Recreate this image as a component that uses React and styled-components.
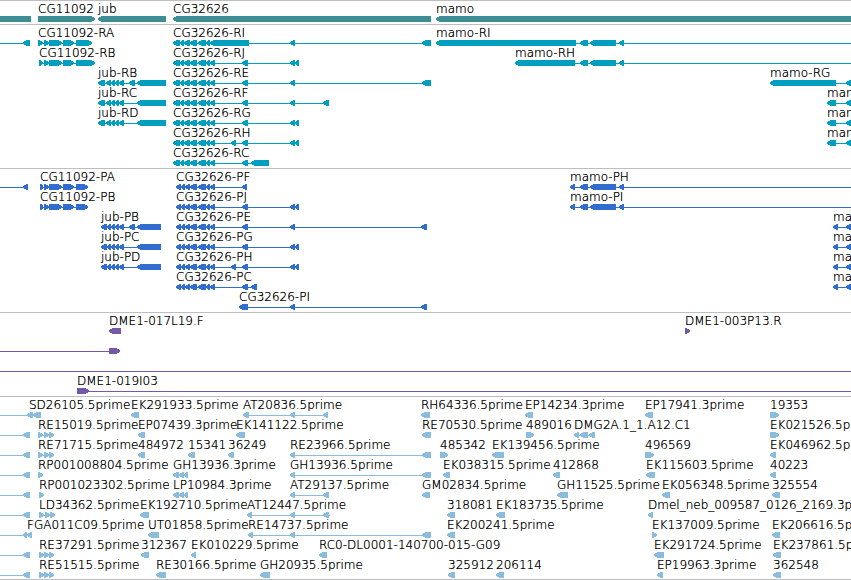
import React from "react";
import styled, { createGlobalStyle } from "styled-components";

const GlobalStyle = createGlobalStyle`
  body {
    margin: 0;
    background: #ffffff;
  }
`;

const Browser = styled.main`
  overflow: hidden;
  border-bottom: 1px solid #bebebe;
  color: #000000;
  font-family: "DejaVu Sans Light", "DejaVu Sans", sans-serif;
  font-size: 12px;
  font-weight: 200;
  line-height: 12px;
`;

const Track = styled.section`
  padding: 2px 0 ${(props) => (props.$last ? 0 : 1)}px;
  border-top: 1px solid #bebebe;
  color: ${(props) => props.$color};
`;

const Row = styled.div`
  display: flex;
  flex-direction: column;
  gap: 1px;
  height: 20px;
`;

// the shadow darkens the thin strokes without widening them
const Labels = styled.div`
  position: relative;
  height: 12px;
  color: #000000;
  text-shadow: 0 0 0 #000000;
`;

// labels start at the genomic position of their feature
const Label = styled.span`
  position: absolute;
  top: 0;
  white-space: nowrap;
`;

const Glyphs = styled.svg`
  display: block;
  width: 100%;
  height: 6px;
  fill: currentColor;
  shape-rendering: crispEdges;
`;

// features that run past the visible region start / end here
const LEFT = -10;
const RIGHT = 4000;
const TIP = 5;

const feature = (name, strand, exons, from, to) => ({
  name,
  strand,
  exons,
  from: from ?? exons[0][0],
  to: to ?? exons[exons.length - 1][1],
});

const rev = (name, exons, to) => feature(name, "-", exons, undefined, to);
const fwd = (name, exons, to) => feature(name, "+", exons, undefined, to);
const fromLeft = (end) => feature("", "-", [[23, end]], LEFT);

const genes = [
  [
    rev("", [[LEFT, 31]]),
    fwd("CG11092", [[38, 95]]),
    rev("jub", [[98, 166]]),
    rev("CG32626", [[173, 431]]),
    rev("mamo", [[436, RIGHT]]),
  ],
];

const cgR = [[173, 180], [180, 184], [184, 190], [190, 197], [198, 206], [206, 210], [210, 215]];
const jubR = [[98, 105], [106, 111], [111, 115], [115, 119], [119, 124]];
const mamoEnd = [[580, 588], [590, 616], [619, 624]];
const mid = [[242, 248]];
const pair = [[290, 295], [295, 299]];

const transcripts = [
  [
    fromLeft(30),
    fwd("CG11092-RA", [[38, 43], [44, 49], [49, 62], [63, 74], [76, 92]]),
    rev("CG32626-RI", [...cgR.slice(0, 6), [210, 249], [290, 295], [422, 431]]),
    rev("mamo-RI", [[436, 576], ...mamoEnd], RIGHT),
  ],
  [
    fwd("CG11092-RB", [[39, 43], [44, 49], [49, 62], [63, 74], [76, 95]]),
    rev("CG32626-RJ", [...cgR, ...mid, ...pair]),
    rev("mamo-RH", [[515, 575], ...mamoEnd], RIGHT),
  ],
  [
    rev("jub-RB", [...jubR, [129, 135], [137, 166]]),
    rev("CG32626-RE", [...cgR, ...mid, [290, 295], [422, 431]]),
    rev("mamo-RG", [[770, 836], [846, 853]], RIGHT),
  ],
  [
    rev("jub-RC", [...jubR, [137, 166]]),
    rev("CG32626-RF", [...cgR, ...mid, [290, 295], [323, 329]]),
    rev("mamo-RD", [[827, 836], [846, 853]], RIGHT),
  ],
  [
    rev("jub-RD", [...jubR, [137, 166]]),
    rev("CG32626-RG", [...cgR, ...mid, ...pair]),
    rev("mamo-RE", [[827, 836], [846, 853]], RIGHT),
  ],
  [
    rev("CG32626-RH", [...cgR, [231, 236], ...mid, ...pair]),
    rev("mamo-RF", [[827, 836], [846, 853]], RIGHT),
  ],
  [rev("CG32626-RC", [...cgR, ...mid, [251, 269]])],
];

const cgP = [[176, 181], [181, 185], [185, 190], [190, 197], [198, 206], [206, 210], [210, 215]];
const cg11092P = [[40, 43], [44, 49], [49, 62], [63, 74], [76, 88]];
const jubP = [[101, 107], [107, 111], [111, 115], [115, 119], [119, 124]];
const mamoP = [[833, 838], [846, 853]];

const proteins = [
  [
    fromLeft(28),
    fwd("CG11092-PA", cg11092P),
    rev("CG32626-PF", [...cgP, [242, 247]]),
    rev("mamo-PH", [[570, 575], ...mamoEnd], RIGHT),
  ],
  [
    fwd("CG11092-PB", cg11092P),
    rev("CG32626-PJ", [...cgP, ...mid, ...pair]),
    rev("mamo-PI", [[570, 575], ...mamoEnd], RIGHT),
  ],
  [
    rev("jub-PB", [...jubP, [129, 135], [137, 161]]),
    rev("CG32626-PE", [...cgP, ...mid, [290, 295], [421, 427]]),
    rev("mamo-PG", mamoP, RIGHT),
  ],
  [
    rev("jub-PC", [...jubP, [137, 161]]),
    rev("CG32626-PG", [...cgP, ...mid, ...pair]),
    rev("mamo-PD", mamoP, RIGHT),
  ],
  [
    rev("jub-PD", [...jubP, [137, 161]]),
    rev("CG32626-PH", [...cgP, [231, 236], ...mid, ...pair]),
    rev("mamo-PE", mamoP, RIGHT),
  ],
  [
    rev("CG32626-PC", [...cgP, ...mid, [251, 257]]),
    rev("mamo-PF", mamoP, RIGHT),
  ],
  [rev("CG32626-PI", [[239, 248], [290, 295], [421, 427]])],
];

const clones = [
  [rev("DME1-017L19.F", [[109, 121]]), fwd("DME1-003P13.R", [[685, 690]])],
  [feature("", "+", [[109, 120]], LEFT)],
  [feature("", "+", [], LEFT, RIGHT)],
  [fwd("DME1-019I03", [[77, 89]], RIGHT)],
];

const triple = [[38, 43], [44, 49], [49, 54]];
const triple2 = [[39, 44], [44, 49], [49, 54]];
const gh = [[173, 179], [179, 184], [184, 188]];

const ests = [
  [
    { ...feature("SD26105.5prime", "-", [[27, 33], [33, 41]], LEFT), labelAt: 29 },
    rev("EK291933.5prime", [[131, 139]]),
    rev("AT20836.5prime", [[243, 249], [290, 295], [323, 328]]),
    rev("RH64336.5prime", [[421, 430]]),
    rev("EP14234.3prime", [[525, 533]]),
    rev("EP17941.3prime", [[645, 653]]),
    fwd("19353", [[770, 779]]),
  ],
  [
    fromLeft(30),
    fwd("RE15019.5prime", triple),
    rev("EP07439.3prime", [[138, 145]]),
    rev("EK141122.5prime", [[236, 245]]),
    rev("RE70530.5prime", [[422, 431]]),
    fwd("489016", [[526, 534]]),
    rev("DMG2A.1_1.A12.C1", [[574, 579], [580, 588], [589, 595]]),
    fwd("EK021526.5prime", [[770, 779]]),
  ],
  [
    fromLeft(30),
    fwd("RE71715.5prime", triple),
    rev("484972", [[138, 145]]),
    rev("15341", [[188, 195]]),
    rev("36249", [[228, 234]]),
    rev("RE23966.5prime", [[290, 295], [422, 431]]),
    fwd("485342", [[440, 448]]),
    rev("EK139456.5prime", [[492, 504]]),
    fwd("496569", [[645, 654]]),
    rev("EK046962.5prime", [[770, 776]]),
  ],
  [
    fromLeft(30),
    fwd("RP001008804.5prime", [[38, 43]]),
    rev("GH13936.3prime", gh),
    rev("GH13936.5prime", [[290, 295], [422, 431]]),
    rev("EK038315.5prime", [[443, 450]]),
    rev("412868", [[553, 560]]),
    rev("EK115603.5prime", [[646, 655]]),
    rev("40223", [[770, 776]]),
  ],
  [
    fromLeft(30),
    fwd("RP001023302.5prime", [[39, 44]]),
    rev("LP10984.3prime", gh),
    rev("AT29137.5prime", [[290, 295], [323, 329]]),
    rev("GM02834.5prime", [[422, 430]]),
    rev("GH11525.5prime", [[557, 568]]),
    rev("EK056348.5prime", [[662, 670]]),
    rev("325554", [[772, 780]]),
  ],
  [
    fromLeft(30),
    fwd("LD34362.5prime", [[39, 44], [45, 50], [50, 55]]),
    rev("EK192710.5prime", [[140, 149]]),
    rev("AT12447.5prime", [[247, 252], [290, 295], [323, 329]], 330),
    rev("318081", [[447, 455]]),
    rev("EK183735.5prime", [[496, 505]]),
    rev("Dmel_neb_009587_0126_2169.3prime", [[648, 653]]),
  ],
  [
    { ...feature("FGA011C09.5prime", "-", [[23, 27], [27, 32]], LEFT), labelAt: 27 },
    rev("UT01858.5prime", [[148, 159]]),
    rev("RE14737.5prime", [[248, 253], [290, 295], [422, 431]]),
    rev("EK200241.5prime", [[447, 455]]),
    fwd("EK137009.5prime", [[652, 657]]),
    rev("EK206616.5prime", [[772, 780]]),
  ],
  [
    fromLeft(30),
    fwd("RE37291.5prime", triple2),
    rev("312367", [[141, 149]]),
    rev("EK010229.5prime", [[191, 196]]),
    rev("RC0-DL0001-140700-015-G09", [[319, 327]]),
    rev("EK291724.5prime", [[654, 664]]),
    rev("EK237861.5prime", [[773, 781]]),
  ],
  [
    fromLeft(30),
    fwd("RE51515.5prime", triple2),
    rev("RE30166.5prime", [[156, 166]]),
    rev("GH20935.5prime", [[260, 270]]),
    rev("325912", [[448, 455]]),
    rev("206114", [[496, 504]]),
    rev("EP19963.3prime", [[657, 663]]),
    rev("362548", [[773, 781]]),
  ],
];

const tracks = [
  { id: "genes", color: "#3f8d94", rows: genes },
  { id: "transcripts", color: "#009ebf", rows: transcripts },
  { id: "proteins", color: "#306dcf", rows: proteins },
  { id: "clones", color: "#7658a8", rows: clones },
  { id: "ests", color: "#8abddd", rows: ests },
];

// exons point in the direction of their strand, with a blunt 2px tip
const exonPoints = ([start, end], strand) => {
  const tip = Math.min(TIP, end - start) - 1;
  if (strand === "+") {
    return `${start},0 ${end - tip},0 ${end},2 ${end},4 ${end - tip},6 ${start},6`;
  }
  return `${start},2 ${start + tip},0 ${end},0 ${end},6 ${start + tip},6 ${start},4`;
};

const Feature = ({ from, to, strand, exons }) => (
  <g>
    <rect x={from} y="3" width={to - from} height="1" />
    {exons.map((exon) => (
      <polygon key={exon[0]} points={exonPoints(exon, strand)} />
    ))}
  </g>
);

const FeatureRow = ({ features }) => (
  <Row>
    <Labels>
      {features
        .filter((item) => item.name)
        .map((item) => (
          <Label
            key={item.name}
            style={{ left: `${item.labelAt ?? item.from}px` }}
          >
            {item.name}
          </Label>
        ))}
    </Labels>
    <Glyphs aria-hidden="true">
      {features.map((item, index) => (
        <Feature key={index} {...item} />
      ))}
    </Glyphs>
  </Row>
);

const App = () => {
  return (
    <>
      <GlobalStyle />
      <Browser>
        {tracks.map((track, index) => (
          <Track
            key={track.id}
            $color={track.color}
            $last={index === tracks.length - 1}
          >
            {track.rows.map((features, row) => (
              <FeatureRow key={row} features={features} />
            ))}
          </Track>
        ))}
      </Browser>
    </>
  );
};

export default App;
